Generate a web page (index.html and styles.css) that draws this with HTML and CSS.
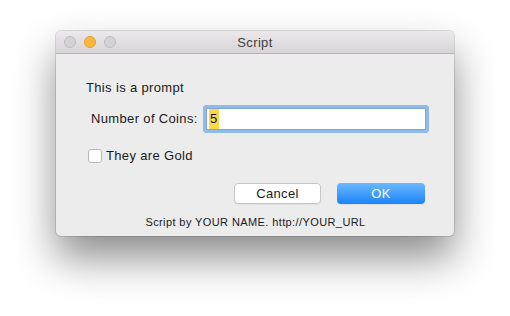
FILE: index.html
```html
<!DOCTYPE html>
<html lang="en">
<head>
  <meta charset="UTF-8">
  <title>Script</title>
  <link rel="stylesheet" href="styles.css">
</head>
<body>
  <div class="window">
    <div class="titlebar">
      <div class="lights">
        <span class="light"></span>
        <span class="light light-min"></span>
        <span class="light"></span>
      </div>
      <div class="title">Script</div>
      <div></div>
    </div>
    <div class="content">
      <p class="prompt">This is a prompt</p>
      <div class="field-row">
        <label class="field-label">Number of Coins:</label>
        <div class="input"><span class="selected">5</span></div>
      </div>
      <div class="check-row">
        <span class="checkbox"></span>
        <span>They are Gold</span>
      </div>
      <div class="buttons">
        <button class="btn">Cancel</button>
        <button class="btn btn-primary">OK</button>
      </div>
      <p class="footer">Script by YOUR NAME. http://YOUR_URL</p>
    </div>
  </div>
</body>
</html>
```

FILE: styles.css
```css
/* Reset default styles */
* {
  margin: 0;
  padding: 0;
  box-sizing: border-box;
}

html {
  min-height: 100%;
  background: #fff;
}

body {
  font-family: 'Liberation Sans', Arial, sans-serif;
  font-size: 13px;
  letter-spacing: 0.35px;
  color: #1a1a1a;
  min-height: 316px;
  padding: 31px 0 0 56px;
}

.window {
  width: 398px;
  height: 205px;
  background: #ececec;
  border-radius: 5px;
  overflow: hidden;
  box-shadow: 0 0 0 1px rgba(0, 0, 0, 0.12), 0 22px 42px rgba(0, 0, 0, 0.45);
}

.titlebar {
  height: 23px;
  display: grid;
  grid-template-columns: 1fr auto 1fr;
  align-items: center;
  background: linear-gradient(#ebe9eb, #d6d4d6);
  border-bottom: 1px solid #b5b3b5;
}

.lights {
  display: flex;
  gap: 8px;
  padding-left: 8px;
}

.light {
  width: 12px;
  height: 12px;
  border-radius: 50%;
  background: #d4d3d4;
  border: 1px solid #bebcbe;
}

.light-min {
  background: #fbb63c;
  border-color: #e2a032;
}

.title {
  color: #404040;
  font-size: 13px;
}

.content {
  padding: 26px 29px 0 30px;
}

.prompt {
  line-height: 16px;
}

.field-row {
  display: flex;
  align-items: center;
  margin-top: 9px;
  padding-left: 5px;
}

.field-label {
  width: 112px;
  flex-shrink: 0;
  line-height: 16px;
}

.input {
  flex-shrink: 0;
  display: flex;
  align-items: center;
  width: 226px;
  height: 28px;
  padding: 3px;
  border-radius: 4px;
  background: #fff;
  box-shadow: inset 0 0 0 3px #8fbbe9, inset 0 0 0 4px #7fa6d3;
}

.selected {
  margin-left: 3px;
  height: 20px;
  line-height: 20px;
  padding: 0 1px;
  background: #fcd849;
  color: #111;
}

.check-row {
  display: flex;
  align-items: center;
  gap: 4px;
  margin-top: 15px;
  padding-left: 2px;
  line-height: 16px;
}

.checkbox {
  width: 14px;
  height: 14px;
  border-radius: 3px;
  background: #fff;
  border: 1px solid #b9b9b9;
}

.buttons {
  display: flex;
  justify-content: flex-end;
  gap: 16px;
  margin-top: 19px;
}

.btn {
  width: 87px;
  height: 21px;
  font-family: inherit;
  font-size: 13px;
  letter-spacing: 0.35px;
  color: #1a1a1a;
  background: #fff;
  border: 1px solid #c6c6c6;
  border-radius: 4px;
  box-shadow: 0 1px 0 rgba(0, 0, 0, 0.05);
}

.btn-primary {
  width: 88px;
  color: #fff;
  border: none;
  background: linear-gradient(#6cb8fb, #1b83fb);
}

.footer {
  margin-top: 11px;
  font-size: 11px;
  letter-spacing: 0.4px;
  line-height: 14px;
  text-align: center;
}
```
